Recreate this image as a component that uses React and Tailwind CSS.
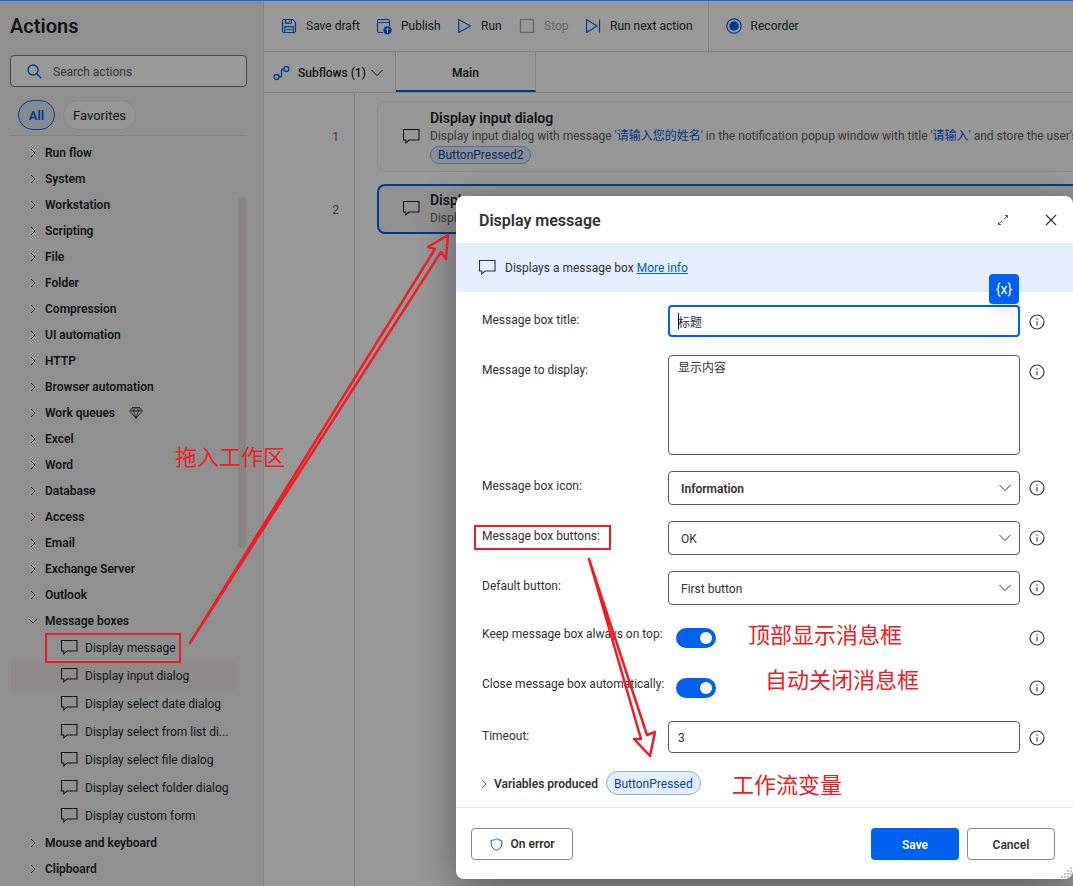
import React from "react";

const ACTION_GROUPS = [
  "Run flow", "System", "Workstation", "Scripting", "File", "Folder", "Compression",
  "UI automation", "HTTP", "Browser automation", "Work queues", "Excel", "Word",
  "Database", "Access", "Email", "Exchange Server", "Outlook",
];

const MESSAGE_ACTIONS = [
  "Display message", "Display input dialog", "Display select date dialog",
  "Display select from list di...", "Display select file dialog",
  "Display select folder dialog", "Display custom form",
];

function Chevron({ down = false, className = "" }) {
  return (
    <svg width="10" height="10" viewBox="0 0 10 10" fill="none" stroke="currentColor" strokeWidth="0.8" className={className} aria-hidden="true">
      <path d={down ? "M1 3l4 4 4-4" : "M3 1l4 4-4 4"} />
    </svg>
  );
}

function BigChevron() {
  return (
    <svg width="14" height="8" viewBox="0 0 14 8" fill="none" stroke="currentColor" strokeWidth="1" aria-hidden="true">
      <path d="M1.500 1L7 6.600 12.500 1" />
    </svg>
  );
}

function MessageIcon() {
  return (
    <svg width="17" height="16" viewBox="0 0 17 16" fill="none" stroke="currentColor" strokeWidth="1.1" className="shrink-0" aria-hidden="true">
      <path d="M.5.5h15.500v10.500H6L2.800 13.800V11H.5z" />
    </svg>
  );
}

function InfoIcon({ topic }) {
  return (
    <button type="button" aria-label={`About ${topic}`} className="flex h-[34px] w-4 shrink-0 items-center justify-center text-[#3b3a39]">
      <svg width="16" height="16" viewBox="0 0 16 16" fill="none" aria-hidden="true">
        <circle cx="8" cy="8" r="7" stroke="currentColor" strokeWidth="1.200" />
        <path d="M8 7v4.500" stroke="#777" strokeWidth="1.500" />
        <path d="M8 4.300v1.500" stroke="#777" strokeWidth="1.500" />
      </svg>
    </button>
  );
}

function Sidebar() {
  return (
    <aside className="relative flex w-[264px] shrink-0 flex-col border-r border-[#dcdcdc] bg-[#f0f0f0]">
      <div className="flex flex-col px-[10px]">
        <h1 className="mt-[11px] h-7 text-[20px] leading-7 font-semibold">Actions</h1>
        <label className="mt-[15px] mr-[6px] flex h-8 items-center rounded-sm border border-[#7a7a7a] bg-white pl-4">
          <svg width="15" height="15" viewBox="0 0 15 15" fill="none" stroke="#0062f0" strokeWidth="1.400" aria-hidden="true">
            <circle cx="6" cy="6" r="5" />
            <path d="M9.600 9.600l4.600 4.600" />
          </svg>
          <input type="search" aria-label="Search actions" placeholder="Search actions" className="ml-[11px] min-w-0 flex-1 bg-transparent pt-[2px] text-[12px] outline-none placeholder:text-[#605e5c]" />
        </label>
        <div className="mt-[13px] mr-[6px] flex gap-2 border-b border-[#dcdcdc] pb-[5px] pl-2">
          <button type="button" className="h-[30px] w-[37px] rounded-full border border-[#0062f0] bg-[#dde8fa] pt-px text-[13px] font-semibold text-[#0058dc]">All</button>
          <button type="button" className="h-[30px] w-[73px] rounded-full border border-[#e4e4e4] bg-[#fafafa] pt-px text-[13px]">Favorites</button>
        </div>
      </div>
      <ul className="mt-1 text-[12px] leading-[26px] font-semibold">
        {ACTION_GROUPS.map((name) => (
          <li key={name}>
            <button type="button" className="flex h-[26px] items-center pl-7">
              <Chevron />
              <span className="ml-[7px]">{name}</span>
              {name === "Work queues" && (
                <svg width="14" height="12" viewBox="0 0 14 12" fill="none" stroke="currentColor" strokeWidth="0.8" className="ml-[14px]" aria-hidden="true">
                  <path d="M3.500.5h7L13.300 4 7 11.300.7 4zM.7 4h12.600M4.500 4L7 11l2.500-7M3.500.5l1 3.500L7 .5 9.500 4l1-3.500" />
                </svg>
              )}
            </button>
          </li>
        ))}
        <li>
          <button type="button" className="flex h-[26px] items-center pl-7">
            <Chevron down />
            <span className="ml-[7px]">Message boxes</span>
          </button>
          <ul className="font-normal">
            {MESSAGE_ACTIONS.map((name, i) => (
              <li key={name}>
                <button type="button" className={i === 1 ? "ml-[11px] flex h-7 w-[225px] items-center bg-[#ebe9e6] pl-[50px]" : "ml-[11px] flex h-7 w-[225px] items-center pl-[50px]"}>
                  <MessageIcon />
                  <span className="ml-[7px] whitespace-nowrap">{name}</span>
                </button>
              </li>
            ))}
          </ul>
        </li>
        {["Mouse and keyboard", "Clipboard"].map((name) => (
          <li key={name}>
            <button type="button" className="flex h-[26px] items-center pl-7">
              <Chevron />
              <span className="ml-[7px]">{name}</span>
            </button>
          </li>
        ))}
      </ul>
      <div className="absolute top-[196px] right-[17px] h-[351px] w-2 rounded-full bg-[#e1dfdd]" />
    </aside>
  );
}

function ToolButton({ icon, children, disabled, className = "" }) {
  return (
    <button type="button" disabled={disabled} className={`flex items-center gap-[9px] whitespace-nowrap disabled:text-[#a8a8a8] ${className}`}>
      {icon}
      {children}
    </button>
  );
}

function Toolbar() {
  return (
    <div className="flex h-[51px] shrink-0 border-b border-[#dcdcdc] text-[12px]">
      <div className="flex items-center border-r border-[#dcdcdc] pr-[15px] pl-[17px]">
        <ToolButton
          className="w-[95px]"
          icon={
            <svg width="16" height="16" viewBox="0 0 16 16" fill="none" stroke="#0062f0" strokeWidth="1.200" aria-hidden="true">
              <path d="M2.600 1.500h9.200l2.700 2.700v8.800a1.500 1.500 0 0 1-1.500 1.500H3A1.500 1.500 0 0 1 1.500 13V2.600a1.100 1.100 0 0 1 1.100-1.100zM4.500 1.500v3.700h6V1.500M3.800 14.500V8.700h8.400v5.800M8.500 2.500v1.500M5.500 11.500h5" />
            </svg>
          }
        >
          Save draft
        </ToolButton>
        <ToolButton
          className="w-[81px]"
          icon={
            <svg width="16" height="17" viewBox="0 0 16 17" fill="none" stroke="#0062f0" strokeWidth="1.200" aria-hidden="true">
              <path d="M7 14.500H3A1.500 1.500 0 0 1 1.500 13V3A1.500 1.500 0 0 1 3 1.500h9A1.500 1.500 0 0 1 13.500 3v5M1.500 4.500h12" />
              <circle cx="11.500" cy="12.300" r="4.100" fill="#0062f0" stroke="none" />
              <path d="M11.500 14.800V10.200M9.700 11.900l1.800-1.800 1.800 1.800" stroke="#fff" strokeWidth="1" />
            </svg>
          }
        >
          Publish
        </ToolButton>
        <ToolButton
          className="w-[62px]"
          icon={
            <svg width="15" height="16" viewBox="0 0 15 16" fill="none" stroke="#0062f0" strokeWidth="1.200" strokeLinejoin="round" aria-hidden="true">
              <path d="M1.700 1.500v13L13.500 8z" />
            </svg>
          }
        >
          Run
        </ToolButton>
        <ToolButton
          disabled
          className="w-[66px]"
          icon={
            <svg width="16" height="16" viewBox="0 0 16 16" fill="none" stroke="#a8a8a8" strokeWidth="1.300" aria-hidden="true">
              <rect x="1.500" y="1.500" width="13" height="13" />
            </svg>
          }
        >
          Stop
        </ToolButton>
        <ToolButton
          icon={
            <svg width="16" height="16" viewBox="0 0 16 16" fill="none" stroke="#0062f0" strokeWidth="1.200" strokeLinejoin="round" aria-hidden="true">
              <path d="M1.500 1.500v13L12 8zM14.500 1.500v13" />
            </svg>
          }
        >
          Run next action
        </ToolButton>
      </div>
      <ToolButton
        className="ml-[17px]"
        icon={
          <svg width="16" height="16" viewBox="0 0 16 16" fill="none" aria-hidden="true">
            <circle cx="8" cy="8" r="7.200" stroke="#0062f0" strokeWidth="1.200" />
            <circle cx="8" cy="8" r="4.700" fill="#0062f0" />
          </svg>
        }
      >
        Recorder
      </ToolButton>
    </div>
  );
}

function Workspace() {
  return (
    <main className="flex min-w-0 flex-1 flex-col bg-white">
      <Toolbar />
      <div className="flex h-[41px] shrink-0 border-b border-[#dcdcdc] text-[12px] font-medium">
        <button type="button" className="flex w-[132px] items-center border-r border-[#dcdcdc] pt-px pl-[9px]">
          <svg width="17" height="16" viewBox="0 0 17 16" fill="none" stroke="#0062f0" strokeWidth="1.300" aria-hidden="true">
            <circle cx="3.500" cy="12" r="2.500" />
            <circle cx="13.300" cy="4" r="2.500" />
            <path d="M6 12h1.200a1.300 1.300 0 0 0 1.300-1.300V5.300A1.300 1.300 0 0 1 9.800 4h1" />
          </svg>
          <span className="mr-1 ml-2 whitespace-nowrap">Subflows (1)</span>
          <BigChevron />
        </button>
        <button type="button" className="w-[140px] border-r border-b-2 border-r-[#dcdcdc] border-b-[#0062f0] pt-[3px] font-semibold">Main</button>
      </div>
      <div className="flex min-h-0 flex-1">
        <div className="flex w-[91px] shrink-0 flex-col border-r border-[#dcdcdc] pt-[9px] pr-[15px] text-right text-[12px] text-[#605e5c]">
          <span className="h-[71px] leading-[71px]">1</span>
          <span className="mt-3 h-[50px] leading-[50px]">2</span>
        </div>
        <div className="flex min-w-0 flex-1 flex-col gap-3 overflow-hidden pt-2 pl-[22px]">
          <div className="flex h-[71px] shrink-0 items-center rounded-l-lg border border-r-0 border-[#ececec] bg-[#fcfcfc] pl-[25px]">
            <MessageIcon />
            <div className="ml-[10px] min-w-0 flex-1 overflow-hidden whitespace-nowrap">
              <div className="text-[14px] leading-[18px] font-semibold">Display input dialog</div>
              <div className="text-[12px] leading-[18px] text-[#605e5c]">
                Display input dialog with message <span className="text-[#0058dc]">'请输入您的姓名'</span> in the notification popup window with title <span className="text-[#0058dc]">'请输入'</span> and store the user's input
              </div>
              <button type="button" className="mt-px block h-[18px] rounded-full border border-[#8ab4f8] bg-[#e4eefe] px-[7px] text-[12px] leading-4 text-[#0c3fa8]">ButtonPressed2</button>
            </div>
          </div>
          <div className="flex h-[50px] shrink-0 items-center rounded-l-lg border-2 border-r-0 border-[#0062f0] bg-[#f2f2f2] pl-6">
            <MessageIcon />
            <div className="ml-[10px] whitespace-nowrap">
              <div className="text-[14px] leading-[18px] font-semibold">Display message</div>
              <div className="text-[12px] leading-[18px] text-[#605e5c]">Display message</div>
            </div>
          </div>
        </div>
      </div>
    </main>
  );
}

function Field({ id, label, tall, raised, children }) {
  return (
    <div className={tall ? "flex h-[100px]" : "flex h-[34px]"}>
      <label htmlFor={id} className={raised ? "w-[186px] shrink-0 pt-1 leading-[18px] whitespace-nowrap" : "w-[186px] shrink-0 pt-[6px] leading-[18px] whitespace-nowrap"}>{label}</label>
      <div className="relative mr-[9px] min-w-0 flex-1">{children}</div>
      <InfoIcon topic={label} />
    </div>
  );
}

function SelectField({ id, label, options, strong }) {
  return (
    <Field id={id} label={label}>
      <select id={id} className={strong ? "h-[34px] w-full appearance-none rounded-sm border border-[#5c5c5c] bg-white px-3 pt-[2px] font-semibold" : "h-[34px] w-full appearance-none rounded-sm border border-[#5c5c5c] bg-white px-3 pt-[2px]"}>
        {options.map((o) => <option key={o}>{o}</option>)}
      </select>
      <span className="pointer-events-none absolute top-[13px] right-2"><BigChevron /></span>
    </Field>
  );
}

function ToggleField({ id, label }) {
  return (
    <Field id={id} label={label} raised>
      <input id={id} type="checkbox" role="switch" defaultChecked className="peer mt-[7px] ml-2 block h-5 w-10 cursor-pointer appearance-none rounded-full bg-[#a0a0a0] checked:bg-[#0060f0]" />
      <span className="pointer-events-none absolute top-[11px] left-3 size-3 rounded-full bg-white peer-checked:left-8" />
    </Field>
  );
}

function DisplayMessageDialog() {
  return (
    <section role="dialog" aria-label="Display message" className="relative flex flex-col overflow-hidden rounded-lg bg-white text-[12px] text-[#323130]">
      <header className="flex h-[47px] items-center pr-4 pl-[23px]">
        <h2 className="flex-1 pt-[2px] text-[16px] font-semibold">Display message</h2>
        <button type="button" aria-label="Expand" className="mr-[37px]">
          <svg width="10" height="10" viewBox="0 0 10 10" fill="none" stroke="currentColor" strokeWidth="0.8" aria-hidden="true">
            <path d="M7 .5h2.500V3M3 9.500H.5V7M9.500.5l-3.500 3.500M.5 9.500l3.500-3.500" />
          </svg>
        </button>
        <button type="button" aria-label="Close">
          <svg width="12" height="12" viewBox="0 0 12 12" fill="none" stroke="currentColor" strokeWidth="1.100" aria-hidden="true">
            <path d="M1 1l10 10M11 1L1 11" />
          </svg>
        </button>
      </header>
      <div className="flex h-[49px] items-center bg-[#e5efff] pl-[23px]">
        <MessageIcon />
        <p className="ml-[9px]">
          Displays a message box <a href="#more-info" className="text-[#0058dc] underline">More info</a>
        </p>
      </div>
      <form className="flex flex-col gap-4 pt-[13px] pr-7 pb-3 pl-[26px]">
        <Field id="title" label="Message box title:">
          <input id="title" type="text" defaultValue="标题" className="h-8 w-full rounded-sm border-2 border-[#0060f0] bg-white px-2 outline-none" />
          <span className="absolute top-2 left-[10px] h-4 w-px bg-black" />
          <button type="button" aria-label="Select variable" className="absolute -top-[31px] right-px flex size-[30px] items-center justify-center rounded bg-[#0060f0] text-[14px] text-white shadow-lg">{"{x}"}</button>
        </Field>
        <Field id="message" label="Message to display:" tall>
          <textarea id="message" defaultValue="显示内容" className="block h-[100px] w-full resize-none rounded-sm border border-[#5c5c5c] bg-white px-[9px] py-[3px] leading-[18px] outline-none" />
        </Field>
        <SelectField id="icon" label="Message box icon:" options={["Information", "Question", "Warning", "Error"]} strong />
        <SelectField id="buttons" label="Message box buttons:" options={["OK", "OK - Cancel", "Yes - No"]} />
        <SelectField id="default" label="Default button:" options={["First button", "Second button", "Third button"]} />
        <ToggleField id="ontop" label="Keep message box always on top:" />
        <ToggleField id="autoclose" label="Close message box automatically:" />
        <Field id="timeout" label="Timeout:">
          <input id="timeout" type="text" defaultValue="3" className="h-8 w-full rounded-sm border border-[#5c5c5c] bg-white px-[9px] pt-[2px] outline-none" />
        </Field>
        <div className="flex h-6 items-center">
          <button type="button" className="flex items-center pt-px font-semibold whitespace-nowrap">
            <Chevron className="-ml-[3px] mr-[5px]" />
            Variables produced
          </button>
          <button type="button" className="ml-2 h-6 rounded-full border border-[#7fb0fb] bg-[#e5efff] px-[7px] pt-[2px] text-[#0c3fa8]">ButtonPressed</button>
        </div>
      </form>
      <footer className="flex h-[72px] items-center gap-2 border-t border-[#e6e6e6] pr-[18px] pl-[15px] font-semibold">
        <button type="button" className="flex h-8 w-[102px] items-center justify-center gap-2 rounded border border-[#8a8886] pt-px">
          <svg width="13" height="13" viewBox="0 0 13 13" fill="none" stroke="#0060f0" strokeWidth="1" strokeLinejoin="round" aria-hidden="true">
            <path d="M6.500.8c1.500 1 3.200 1.500 5.300 1.500v3.900c0 2.900-2 4.900-5.300 6.100-3.300-1.200-5.300-3.200-5.300-6.100V2.300C3.300 2.300 5 1.800 6.500.8z" />
          </svg>
          On error
        </button>
        <span className="flex-1" />
        <button type="button" className="h-8 w-[88px] rounded bg-[#0060f0] pt-[2px] text-white">Save</button>
        <button type="button" className="h-8 w-[88px] rounded border border-[#8a8886] pt-[2px]">Cancel</button>
      </footer>
      <svg width="12" height="12" viewBox="0 0 12 12" fill="#bcc4d8" className="absolute right-0 bottom-0" aria-hidden="true">
        <path d="M9 0h2v2H9zM6 3h2v2H6zM9 3h2v2H9zM3 6h2v2H3zM6 6h2v2H6zM9 6h2v2H9zM0 9h2v2H0zM3 9h2v2H3zM6 9h2v2H6zM9 9h2v2H9z" />
      </svg>
    </section>
  );
}

function Annotations() {
  return (
    <div className="pointer-events-none absolute inset-0 font-['Noto_Sans_CJK_SC',sans-serif] text-[22px] leading-6 whitespace-nowrap text-[#ee1c24]">
      <svg width="1073" height="886" viewBox="0 0 1073 886" fill="none" stroke="#ee1c24" aria-hidden="true" className="absolute top-0 left-0">
        <rect x="46" y="634" width="134" height="28" strokeWidth="2" />
        <rect x="475" y="526" width="135" height="23" strokeWidth="2" />
        <path d="M190 643L435 249L428 247L448 235L446 259L441 252Z" strokeWidth="2.500" strokeLinejoin="round" />
        <path d="M589 559L641 739L634 739L650 756L655 732L647 735Z" strokeWidth="2.500" strokeLinejoin="round" />
      </svg>
      <span className="absolute top-[443px] left-[175px]">拖入工作区</span>
      <span className="absolute top-[621px] left-[748px]">顶部显示消息框</span>
      <span className="absolute top-[666px] left-[765px]">自动关闭消息框</span>
      <span className="absolute top-[771px] left-[732px]">工作流变量</span>
    </div>
  );
}

export default function App() {
  return (
    <div className="relative flex h-screen flex-col overflow-hidden font-['Roboto','Noto_Sans_CJK_SC',sans-serif] text-[#201f1e]">
      <div className="flex min-h-0 flex-1 pt-px">
        <Sidebar />
        <Workspace />
      </div>
      <div className="absolute inset-0 overflow-hidden bg-black/40 pt-[196px] pl-[456px]">
        <div className="rounded-lg shadow-[0_12px_40px_rgba(0,0,0,0.4)]">
          <DisplayMessageDialog />
        </div>
      </div>
      <div className="absolute inset-x-0 top-0 h-px bg-[#0a66ff]" />
      <Annotations />
    </div>
  );
}
